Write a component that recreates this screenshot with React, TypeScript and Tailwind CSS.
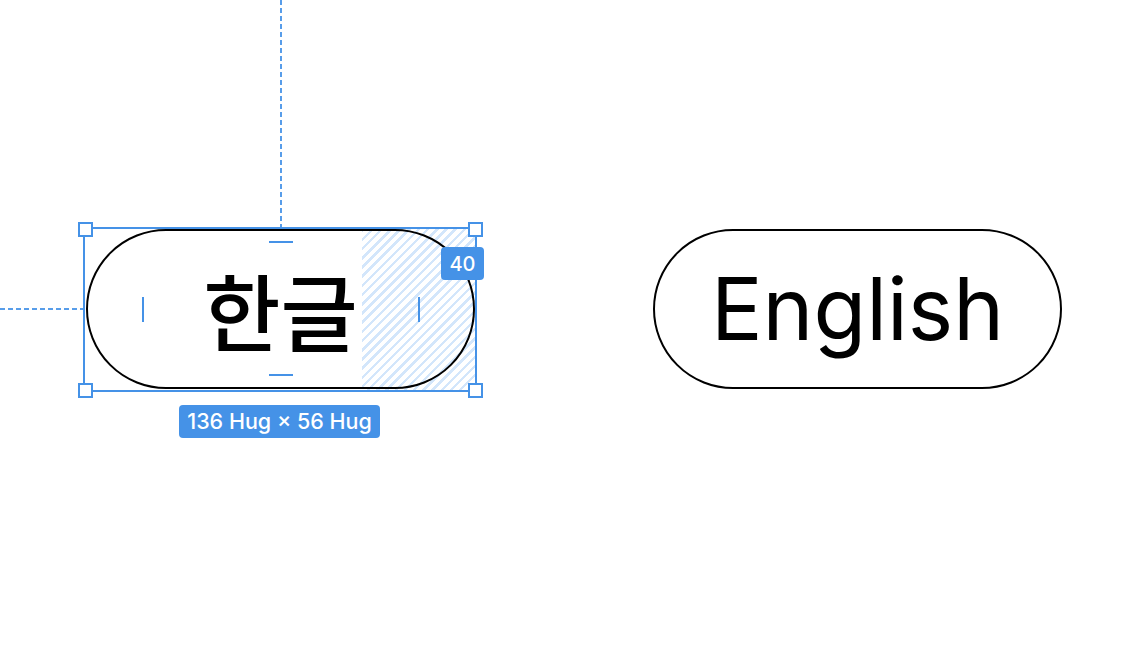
import React from 'react';

// Corner handles of the selection box, relative to the Korean pill
const handles = [
    'left-[-8px] top-[-7px]',
    'left-[382px] top-[-7px]',
    'left-[-8px] top-[154px]',
    'left-[382px] top-[154px]',
];

const SelectedPill: React.FC = () => (
    <div className="relative h-[160px] w-[389px] shrink-0">
        {/* Padding hatch (right padding 40) */}
        <div className="absolute left-[276px] top-0 h-[161px] w-[114px] bg-[repeating-linear-gradient(135deg,#d3e6fb_0px,#d3e6fb_2.5px,#ffffff_2.5px,#ffffff_6.5px)]" />

        {/* Pill */}
        <div className="relative flex h-[160px] w-[389px] items-center justify-center rounded-full border-[2.5px] border-black">
            <span
                className="text-[84px] font-medium leading-none text-black"
                style={{ fontFamily: '"Noto Sans CJK KR", "Noto Sans", sans-serif' }}
            >
                한글
            </span>
        </div>

        {/* Selection box */}
        <div className="pointer-events-none absolute left-[-3px] top-[-2px] h-[165px] w-[394px] border-2 border-[#4592e7]" />
        {handles.map((pos) => (
            <div key={pos} className={`absolute ${pos} h-[15px] w-[15px] border-2 border-[#4592e7] bg-white`} />
        ))}

        {/* Padding markers */}
        <div className="absolute left-[183px] top-[12px] h-[2px] w-[24px] bg-[#4592e7]" />
        <div className="absolute left-[183px] top-[145px] h-[2px] w-[24px] bg-[#4592e7]" />
        <div className="absolute left-[56px] top-[68px] h-[25px] w-[2px] bg-[#4592e7]" />
        <div className="absolute left-[332px] top-[68px] h-[25px] w-[2px] bg-[#4592e7]" />

        {/* Padding value badge */}
        <div className="absolute left-[355px] top-[18px] flex h-[33px] w-[43px] items-center justify-center rounded-[4px] bg-[#4592e7] font-['Inter',sans-serif] text-[20px] font-medium text-white">
            40
        </div>

        {/* Size label */}
        <div className="absolute left-[93px] top-[176px] flex h-[33px] w-[201px] items-center justify-center rounded-[4px] bg-[#4592e7] font-['Inter',sans-serif] text-[21.5px] font-medium text-white">
            136 Hug × 56 Hug
        </div>
    </div>
);

export default function App() {
    return (
        <div className="relative h-[646px] w-[1124px] overflow-hidden bg-white">
            {/* Alignment guides */}
            <div className="absolute left-[280px] top-0 h-[227px] w-[2px] bg-[repeating-linear-gradient(180deg,#4592e7_0px,#4592e7_5px,transparent_5px,transparent_8px)] opacity-90" />
            <div className="absolute left-0 top-[308px] h-[2px] w-[83px] bg-[repeating-linear-gradient(90deg,#4592e7_0px,#4592e7_5px,transparent_5px,transparent_8px)] opacity-90" />

            <div className="flex items-start gap-[178px] pl-[86px] pt-[229px]">
                <SelectedPill />
                <div className="flex h-[160px] w-[409px] shrink-0 items-center justify-center rounded-full border-[2.5px] border-black">
                    <span className="font-['Inter',sans-serif] text-[86px] leading-none text-black">English</span>
                </div>
            </div>
        </div>
    );
}
